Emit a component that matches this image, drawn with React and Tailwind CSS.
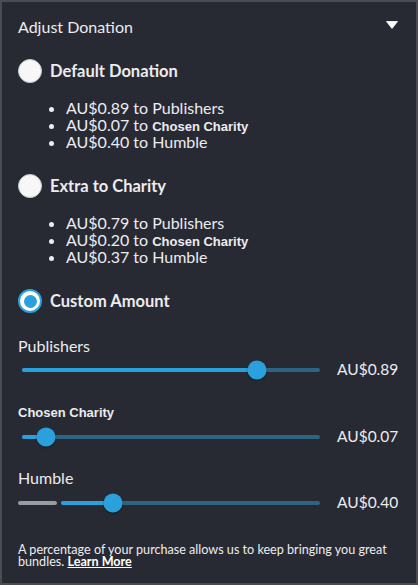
import React from 'react';

const Radio = ({ checked }) => (
  checked ? (
    <span className="w-6 h-6 rounded-full bg-white border-2 border-[#2aa1dd] flex items-center justify-center shrink-0">
      <span className="w-[13px] h-[13px] rounded-full bg-[#2aa1dd]"></span>
    </span>
  ) : (
    <span className="w-6 h-6 rounded-full bg-[#f7f7f8] border border-[#c9cacf] shrink-0"></span>
  )
);

const Option = ({ label, checked, className }) => (
  <div className={`flex items-center gap-[8px] ${className}`}>
    <Radio checked={checked} />
    <span className="text-[16.5px] font-bold text-[#ececef] leading-6">{label}</span>
  </div>
);

const Breakdown = ({ items, className }) => (
  <ul className={`list-disc pl-[48px] text-[16px] leading-[17px] text-[#ececef] ${className}`}>
    <li className="h-[17px]">{items[0]} to Publishers</li>
    <li className="h-[17px]">{items[1]} to <span className="font-['Liberation_Sans',sans-serif] font-bold text-[13px] leading-none">Chosen Charity</span></li>
    <li className="h-[17px]">{items[2]} to Humble</li>
  </ul>
);

const Track = ({ pct }) => (
  <div className="relative flex-1 h-1 rounded-full bg-[#2c6584]">
    <div className="absolute left-0 top-0 h-1 rounded-full bg-[#2aa1dd]" style={{ width: `${pct}%` }}></div>
    <div
      className="absolute top-1/2 w-[19px] h-[19px] -translate-x-1/2 -translate-y-1/2 rounded-full bg-[#2aa1dd] shadow-[0_1px_2px_rgba(0,0,0,0.4)]"
      style={{ left: `${pct}%` }}
    ></div>
  </div>
);

const Slider = ({ pct, value, floor, className }) => (
  <div className={`flex items-center h-5 ${className}`}>
    {floor ? (
      <div className="flex items-center w-[302px] gap-[4px]">
        <div className="w-[39px] h-1 rounded-full bg-[#9a9ca3]"></div>
        <Track pct={pct} />
      </div>
    ) : (
      <div className="flex items-center w-[302px] pl-[4px]">
        <Track pct={pct} />
      </div>
    )}
    <span className="ml-[17px] text-[15.5px] text-[#ececef]">{value}</span>
  </div>
);

export default function App() {
  return (
    <div className="w-[418px] h-[585px] border-2 border-[#4a4c54] bg-[#282a33] font-['Lato',sans-serif] text-[#ececef] px-4 pt-[15px]">
      <div className="flex items-center justify-between h-5">
        <span className="text-[16px]">Adjust Donation</span>
        <svg width="12" height="8" viewBox="0 0 12 8" className="mr-[2px] -mt-[4px]">
          <path d="M0.5 0.5 L11.5 0.5 L6 7.5 Z" fill="#ffffff" strokeLinejoin="round" stroke="#ffffff" strokeWidth="0.8" />
        </svg>
      </div>

      <Option label="Default Donation" className="mt-[22px]" />
      <Breakdown items={['AU$0.89', 'AU$0.07', 'AU$0.40']} className="mt-4" />

      <Option label="Extra to Charity" className="mt-[24px]" />
      <Breakdown items={['AU$0.79', 'AU$0.20', 'AU$0.37']} className="mt-4" />

      <Option label="Custom Amount" checked className="mt-[24px]" />

      <div className="mt-[23px] text-[16px] leading-5">Publishers</div>
      <Slider pct={79} value="AU$0.89" className="mt-[4px]" />

      <div className="mt-[25px] font-['Liberation_Sans',sans-serif] font-bold text-[13px] leading-4">Chosen Charity</div>
      <Slider pct={8} value="AU$0.07" className="mt-[6px]" />

      <div className="mt-[21px] text-[16px] leading-5">Humble</div>
      <Slider pct={20} value="AU$0.40" floor className="mt-[5px]" />

      <p className="mt-[31px] text-[12.6px] leading-[12px] pr-2">
        A percentage of your purchase allows us to keep bringing you great bundles.{' '}
        <a href="#" className="font-bold underline underline-offset-1 text-white">Learn More</a>
      </p>
    </div>
  );
}
